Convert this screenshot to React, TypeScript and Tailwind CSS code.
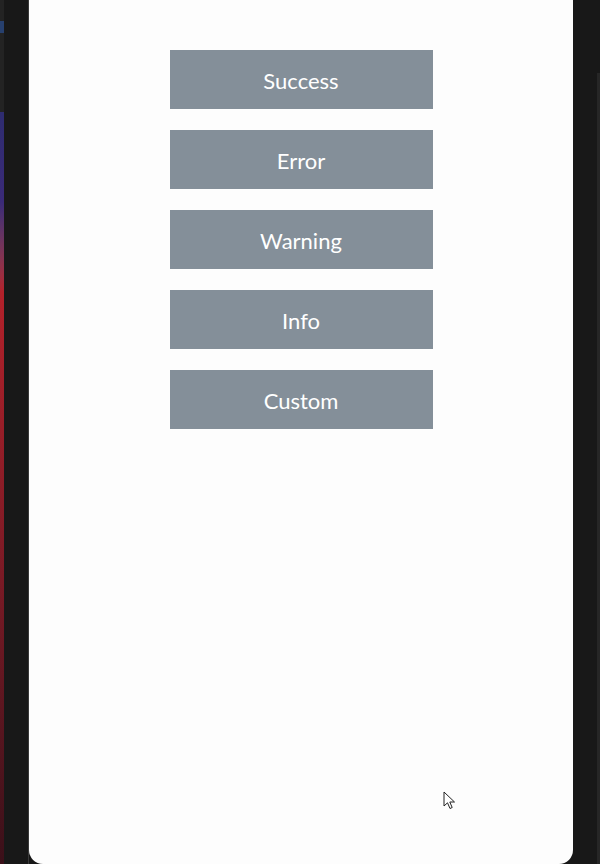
import React from "react";

const labels = ["Success", "Error", "Warning", "Info", "Custom"];

export default function App() {
  return (
    <div className="w-[600px] h-[864px] bg-[#181818] flex overflow-hidden relative">
      {/* left edge strip */}
      <div className="w-[4px] h-full flex flex-col">
        <div className="h-[21px] bg-[#232323]" />
        <div className="h-[12px] bg-[#27406e]" />
        <div className="h-[79px] bg-[#232323]" />
        <div className="h-[180px] bg-gradient-to-b from-[#2e2c70] via-[#3a2a78] to-[#b3212a]" />
        <div className="flex-1 bg-gradient-to-b from-[#b3212a] via-[#7a1a25] to-[#3a1019]" />
      </div>
      <div className="w-[24px] h-full bg-[#181818]" />
      <div className="w-[1px] h-full bg-[#3a3a3a]" />
      {/* phone screen */}
      <div className="w-[544px] h-full bg-[#fdfdfd] rounded-b-[14px] flex flex-col items-center pt-[50px] gap-[21px]">
        {labels.map((l) => (
          <div
            key={l}
            className="w-[263px] h-[59px] pt-[2px] bg-[#848f99] flex items-center justify-center text-white text-[22px] leading-none"
            style={{ fontFamily: "Lato, 'Open Sans', sans-serif" }}
          >
            {l}
          </div>
        ))}
      </div>
      <div className="flex-1 h-full bg-[#181818] flex justify-end">
        <div className="w-[3px] mt-[73px] h-[791px] bg-[#262626]" />
      </div>
      {/* mouse cursor */}
      <svg
        className="absolute left-[443px] top-[791px]"
        width="14"
        height="20"
        viewBox="0 0 14 20"
      >
        <path
          d="M1 1 L1 15 L4.5 11.8 L7 17.5 L9.2 16.5 L6.8 11 L11.5 11 Z"
          fill="#ffffff"
          stroke="#222222"
          strokeWidth="1"
          strokeLinejoin="round"
        />
      </svg>
    </div>
  );
}
